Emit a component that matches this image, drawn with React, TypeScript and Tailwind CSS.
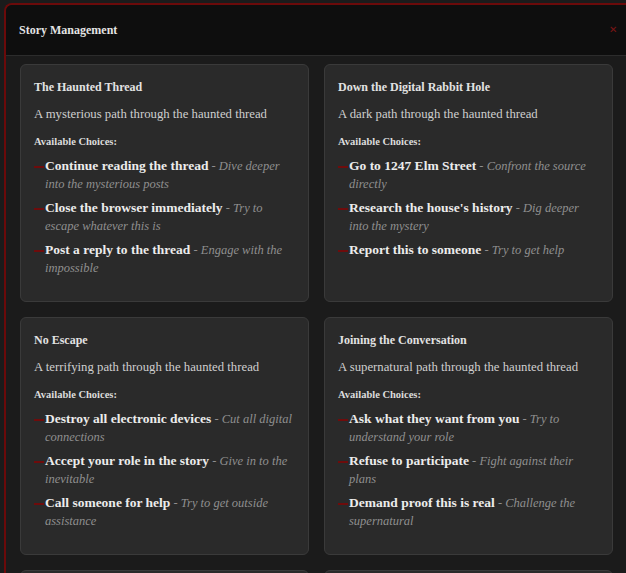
import React from 'react';

interface Choice {
  label: string;
  hint: string;
}

interface Story {
  title: string;
  description: string;
  choices: Choice[];
}

const stories: Story[] = [
  {
    title: 'The Haunted Thread',
    description: 'A mysterious path through the haunted thread',
    choices: [
      { label: 'Continue reading the thread', hint: 'Dive deeper into the mysterious posts' },
      { label: 'Close the browser immediately', hint: 'Try to escape whatever this is' },
      { label: 'Post a reply to the thread', hint: 'Engage with the impossible' },
    ],
  },
  {
    title: 'Down the Digital Rabbit Hole',
    description: 'A dark path through the haunted thread',
    choices: [
      { label: 'Go to 1247 Elm Street', hint: 'Confront the source directly' },
      { label: "Research the house's history", hint: 'Dig deeper into the mystery' },
      { label: 'Report this to someone', hint: 'Try to get help' },
    ],
  },
  {
    title: 'No Escape',
    description: 'A terrifying path through the haunted thread',
    choices: [
      { label: 'Destroy all electronic devices', hint: 'Cut all digital connections' },
      { label: 'Accept your role in the story', hint: 'Give in to the inevitable' },
      { label: 'Call someone for help', hint: 'Try to get outside assistance' },
    ],
  },
  {
    title: 'Joining the Conversation',
    description: 'A supernatural path through the haunted thread',
    choices: [
      { label: 'Ask what they want from you', hint: 'Try to understand your role' },
      { label: 'Refuse to participate', hint: 'Fight against their plans' },
      { label: 'Demand proof this is real', hint: 'Challenge the supernatural' },
    ],
  },
  {
    title: 'The Final Post',
    description: 'An ominous path through the haunted thread',
    choices: [
      { label: 'Read the last message', hint: 'Face what comes next' },
      { label: 'Log off forever', hint: 'Try to forget' },
    ],
  },
  {
    title: 'Aftermath',
    description: 'A lingering path through the haunted thread',
    choices: [
      { label: 'Look back once more', hint: 'See what remains' },
      { label: 'Walk away', hint: 'Leave it behind' },
    ],
  },
];

function StoryCard({ story }: { story: Story }) {
  return (
    <div className="rounded-[6px] border border-[#3a3a3a] bg-[#2a2a2a] px-[13px] pt-[12px] pb-[24px]">
      <h3 className="text-[12px] leading-[20px] font-bold text-[#e2e2e2]">{story.title}</h3>
      <p className="mt-[7px] text-[12.75px] leading-[20px] text-[#cfcfcf]">{story.description}</p>
      <h4 className="mt-[10px] text-[10.5px] leading-[16px] font-bold text-[#dcdcdc]">
        Available Choices:
      </h4>
      <ul className="mt-[7px] flex flex-col gap-[6px]">
        {story.choices.map((choice) => (
          <li key={choice.label} className="relative pl-[11px] text-[13.5px] leading-[18px]">
            <span className="absolute left-0 top-[9px] h-[1.5px] w-[10px] bg-[#6e0c0c]" />
            <strong className="font-bold text-[#ececec]">{choice.label}</strong>
            <span className="text-[12.5px] italic text-[#8f8f8f]"> - {choice.hint}</span>
          </li>
        ))}
      </ul>
    </div>
  );
}

export default function App() {
  return (
    <div
      className="h-[573px] w-[626px] overflow-hidden bg-[#1b1b1b] pl-[4px] pt-[3px]"
      style={{ fontFamily: '"Liberation Serif", serif' }}
    >
      <div className="w-[628px] rounded-tl-[8px] border-t-2 border-l-2 border-[#6b0a0a] bg-[#1b1b1b]">
        {/* Header */}
        <div className="flex h-[51px] items-center justify-between rounded-tl-[6px] border-b border-[#2c2c2c] bg-[#0e0e0e] pl-[13px] pr-[15px]">
          <h2 className="text-[12px] font-bold text-[#e4e4e4]">Story Management</h2>
          <span className="text-[10px] leading-none text-[#7a1515]">✕</span>
        </div>

        {/* Cards */}
        <div className="grid grid-cols-2 gap-[15px] py-[8px] pl-[14px] pr-[19px]">
          {stories.map((story) => (
            <StoryCard key={story.title} story={story} />
          ))}
        </div>
      </div>
    </div>
  );
}
